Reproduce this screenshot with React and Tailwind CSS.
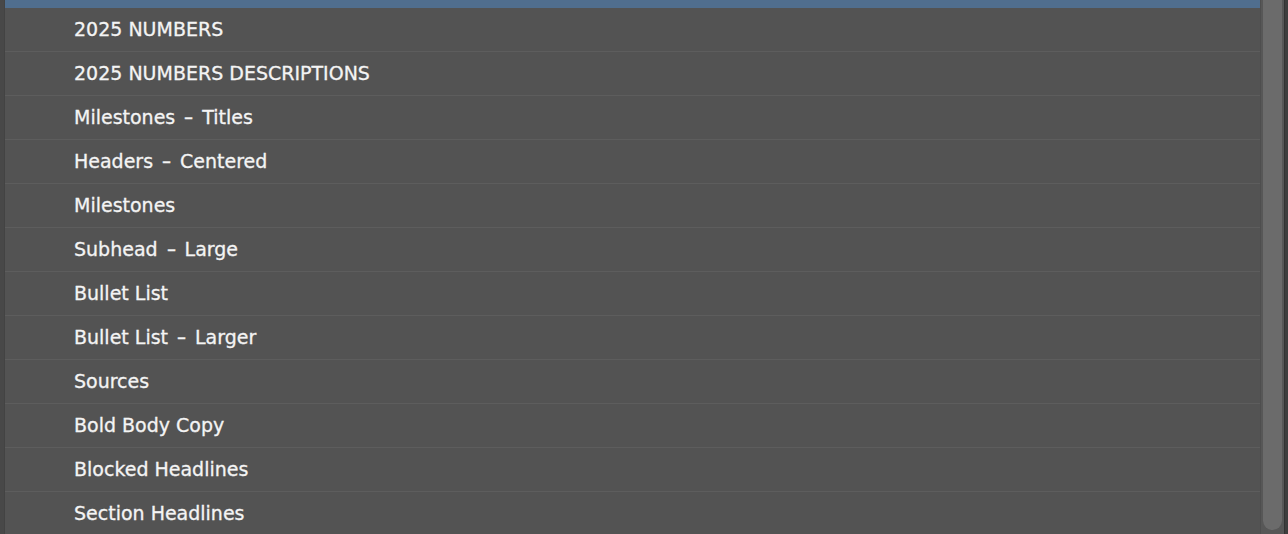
import React from 'react';

const styles = [
  '2025 NUMBERS',
  '2025 NUMBERS DESCRIPTIONS',
  'Milestones - Titles',
  'Headers - Centered',
  'Milestones',
  'Subhead - Large',
  'Bullet List',
  'Bullet List - Larger',
  'Sources',
  'Bold Body Copy',
  'Blocked Headlines',
  'Section Headlines',
];

// the dash in these names is drawn a bit wider, like the mac font does
const StyleName = ({ name }) => {
  const parts = name.split(' - ');
  if (parts.length < 2) return name;
  return (
    <>
      {parts[0]}{' '}
      <span className="inline-block mx-[4px] scale-x-[1.4]">-</span>
      {' '}{parts[1]}
    </>
  );
};

const App = () => {
  return (
    <div className="flex h-[534px] w-[1288px] overflow-hidden bg-[#535353]" style={{ fontFamily: '"DejaVu Sans", sans-serif' }}>
      {/* left edge */}
      <div className="w-[5px] bg-[#484848] border-r border-[#434343]" />

      {/* list */}
      <div className="flex-1 flex flex-col">
        <div className="h-[8px] shrink-0 bg-[#506e8e]" />
        {styles.map((name) => (
          <div key={name} className="h-[44px] shrink-0 flex items-center pl-[69px] border-b border-[#5d5d5d]">
            <span className="text-[19px] leading-none text-[#f4f4f4] [-webkit-text-stroke:0.3px_#f4f4f4]">
              <StyleName name={name} />
            </span>
          </div>
        ))}
      </div>

      {/* scrollbar */}
      <div className="w-[24px] bg-[#575757] border-l border-[#4e4e4e] flex justify-center pb-[4px]">
        <div className="w-[19px] h-full bg-[#6b6b6b] rounded-b-full" />
      </div>

      {/* right edge */}
      <div className="w-[4px] bg-[#3e3e3e] border-l border-[#333]" />
    </div>
  );
};

export default App;
